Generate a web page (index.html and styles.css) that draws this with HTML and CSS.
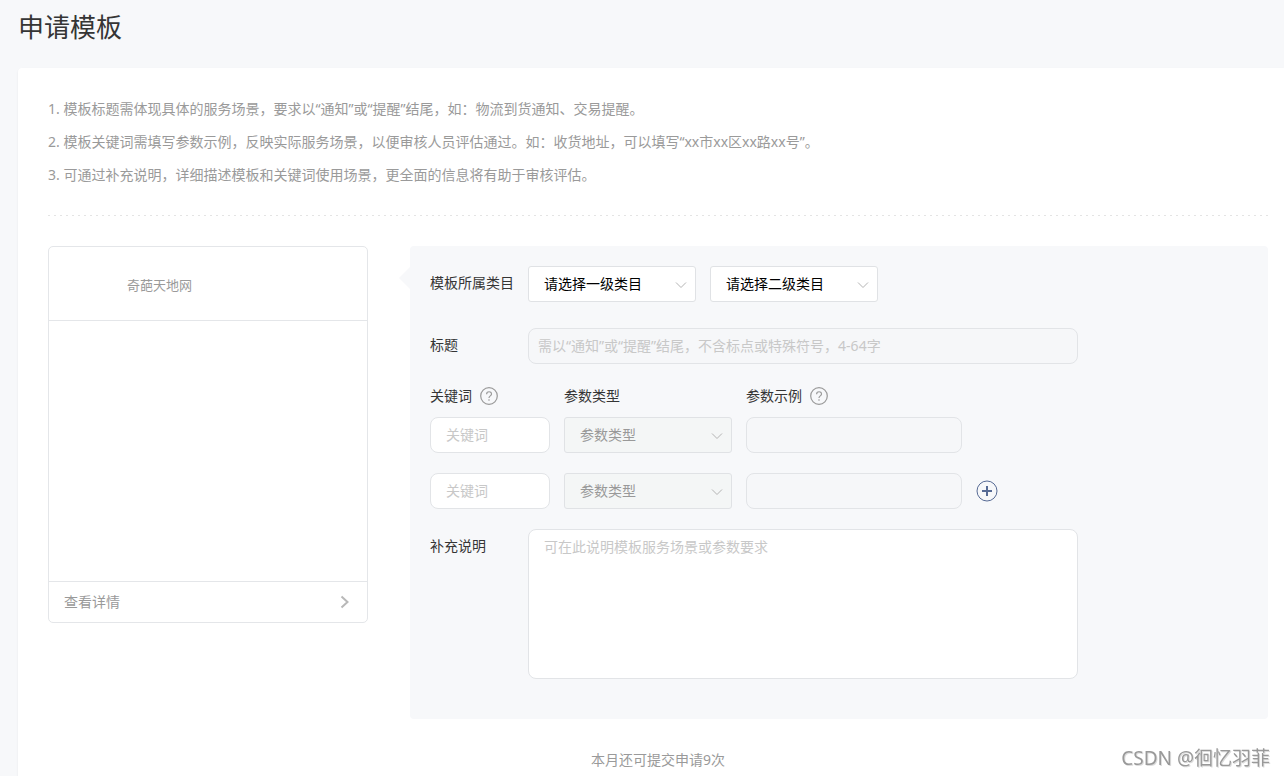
FILE: index.html
```html
<!DOCTYPE html>
<html lang="zh-CN">
<head>
<meta charset="utf-8">
<meta name="viewport" content="width=device-width, initial-scale=1">
<title>申请模板</title>
<link rel="stylesheet" href="styles.css">
</head>
<body>
<h1 class="page-title">申请模板</h1>
<main class="card">
  <ol class="tips">
    <li>1. 模板标题需体现具体的服务场景，要求以“通知”或“提醒”结尾，如：物流到货通知、交易提醒。</li>
    <li>2. 模板关键词需填写参数示例，反映实际服务场景，以便审核人员评估通过。如：收货地址，可以填写“xx市xx区xx路xx号”。</li>
    <li>3. 可通过补充说明，详细描述模板和关键词使用场景，更全面的信息将有助于审核评估。</li>
  </ol>
  <div class="divider"></div>
  <div class="columns">
    <section class="preview">
      <div class="preview-head">奇葩天地网</div>
      <div class="preview-body"></div>
      <a class="preview-foot" href="#">
        <span>查看详情</span>
        <svg class="arrow" viewBox="0 0 14 14"><path d="M3.5 1.5 9.5 7l-6 5.500"/></svg>
      </a>
    </section>
    <form class="panel">
      <div class="row">
        <label class="label" for="cat1">模板所属类目</label>
        <div class="controls">
          <div class="select">
            <select id="cat1"><option>请选择一级类目</option></select>
            <svg class="chevron" viewBox="0 0 12 8"><path d="M1 1.500 6 6.500l5-5"/></svg>
          </div>
          <div class="select">
            <select aria-label="二级类目"><option>请选择二级类目</option></select>
            <svg class="chevron" viewBox="0 0 12 8"><path d="M1 1.500 6 6.500l5-5"/></svg>
          </div>
        </div>
      </div>
      <div class="row title-row">
        <label class="label" for="title">标题</label>
        <input class="field title-field" id="title" type="text" disabled placeholder="需以“通知”或“提醒”结尾，不含标点或特殊符号，4-64字">
      </div>
      <div class="params">
        <div class="param-head" id="h-key">关键词
          <svg class="help" viewBox="0 0 18 18"><circle cx="9" cy="9" r="8.300"/><path d="M6.600 7.200C6.600 4 11.500 4 11.500 7c0 1.900-2.500 1.900-2.500 4"/><path d="M9 12.300v1.400"/></svg>
        </div>
        <div class="param-head" id="h-type">参数类型</div>
        <div class="param-head" id="h-sample">参数示例
          <svg class="help" viewBox="0 0 18 18"><circle cx="9" cy="9" r="8.300"/><path d="M6.600 7.200C6.600 4 11.500 4 11.500 7c0 1.900-2.500 1.900-2.500 4"/><path d="M9 12.300v1.400"/></svg>
        </div>
        <span></span>

        <input class="field key-field" type="text" aria-labelledby="h-key" placeholder="关键词">
        <div class="select">
          <select disabled aria-labelledby="h-type"><option>参数类型</option></select>
          <svg class="chevron" viewBox="0 0 12 8"><path d="M1 1.500 6 6.500l5-5"/></svg>
        </div>
        <input class="field" type="text" disabled aria-labelledby="h-sample">
        <span></span>

        <input class="field key-field" type="text" aria-labelledby="h-key" placeholder="关键词">
        <div class="select">
          <select disabled aria-labelledby="h-type"><option>参数类型</option></select>
          <svg class="chevron" viewBox="0 0 12 8"><path d="M1 1.500 6 6.500l5-5"/></svg>
        </div>
        <input class="field" type="text" disabled aria-labelledby="h-sample">
        <button class="add" type="button" aria-label="添加">
          <svg viewBox="0 0 22 22"><circle cx="11" cy="11" r="10"/><path class="plus" d="M11 6v10M6 11h10"/></svg>
        </button>
      </div>
      <div class="row note-row">
        <label class="label" for="note">补充说明</label>
        <textarea class="field note" id="note" placeholder="可在此说明模板服务场景或参数要求"></textarea>
      </div>
    </form>
  </div>
  <p class="quota">本月还可提交申请9次</p>
</main>
<div class="watermark">CSDN @徊忆羽菲</div>
</body>
</html>
```
FILE: styles.css
```css
* {
  box-sizing: border-box;
}

body {
  margin: 0;
  padding: 7px 0 0 18px;
  min-height: 100vh;
  display: flex;
  flex-direction: column;
  background: #f7f8fa;
  color: #353535;
  font: 14px/24px "Noto Sans", "Noto Sans CJK SC", sans-serif;
}

.page-title {
  margin: 0 0 21px;
  font-size: 26px;
  font-weight: 400;
  line-height: 40px;
}

.card {
  flex: 1;
  padding: 29px 16px 0 30px;
  background: #fff;
  border-radius: 4px 0 0 0;
  box-shadow: 0 1px 2px rgba(0, 0, 0, 0.08);
}

.tips {
  margin: 0;
  padding: 0;
  list-style: none;
  display: grid;
  gap: 9px;
  color: #9a9a9a;
}

.divider {
  height: 1px;
  margin: 28px 0 30px;
  background: repeating-linear-gradient(90deg, #e4e4e4 0 2px, transparent 2px 6px);
}

.columns {
  display: flex;
  align-items: flex-start;
  gap: 42px;
}

.preview {
  flex: 0 0 320px;
  border: 1px solid #e4e6e9;
  border-radius: 5px;
  color: #9a9a9a;
}

.preview-head {
  padding: 26px 78px 23px;
  font-size: 13px;
  border-bottom: 1px solid #e4e6e9;
}

.preview-body {
  height: 260px;
}

.preview-foot {
  display: flex;
  align-items: center;
  justify-content: space-between;
  padding: 8px 15px;
  border-top: 1px solid #e4e6e9;
  color: #9a9a9a;
  text-decoration: none;
}

svg {
  fill: none;
}

.arrow {
  width: 14px;
  height: 14px;
  stroke: #b8b8b8;
  stroke-width: 2;
}

.panel {
  position: relative;
  flex: 1;
  padding: 20px 20px 40px;
  background: #f7f8fa;
  border-radius: 4px;
}

.panel::before {
  content: "";
  position: absolute;
  left: -11px;
  top: 21px;
  border: solid transparent;
  border-width: 11px 11px 11px 0;
  border-right-color: #f7f8fa;
}

.row {
  display: flex;
}

.label {
  flex: 0 0 98px;
  line-height: 34px;
}

.controls {
  display: flex;
  gap: 14px;
}

.title-row {
  margin: 26px 0 20px;
}

.select {
  position: relative;
  width: 168px;
}

.select select {
  display: block;
  width: 100%;
  height: 36px;
  padding: 0 15px;
  appearance: none;
  border: 1px solid #e0e2e5;
  border-radius: 3px;
  background: #fff;
  color: #000;
  font: inherit;
}

.select select:disabled {
  background: #f4f6f6;
  color: #999;
  opacity: 1;
}

.chevron {
  position: absolute;
  right: 9px;
  top: 15px;
  width: 12px;
  height: 8px;
  stroke: #b4b4b4;
  pointer-events: none;
}

.field {
  display: block;
  width: 100%;
  height: 36px;
  min-width: 0;
  padding: 0 15px 2px;
  border: 1px solid #e2e4e7;
  border-radius: 8px;
  background: #fff;
  color: #353535;
  font: inherit;
}

.field:disabled {
  background: #f6f7f9;
}

.field::placeholder {
  color: #c8c8c8;
  opacity: 1;
}

.title-field {
  max-width: 550px;
  padding: 0 9px 2px;
}

.params {
  display: grid;
  grid-template-columns: 120px 168px 216px 22px;
  column-gap: 14px;
  row-gap: 20px;
  align-items: center;
}

.param-head {
  display: flex;
  align-items: center;
  gap: 8px;
  margin-bottom: -11px;
}

.help {
  width: 18px;
  height: 18px;
  stroke: #9a9a9a;
  stroke-width: 1.2;
}

.add {
  width: 22px;
  height: 22px;
  padding: 0;
  border: 0;
  background: none;
  stroke: #576b95;
}

.add svg {
  display: block;
}

.plus {
  stroke-width: 2;
}

.note-row {
  margin-top: 20px;
}

.note {
  max-width: 550px;
  height: 150px;
  padding: 5px 15px;
  resize: none;
}

.quota {
  margin: 29px 0 0;
  color: #9a9a9a;
  text-align: center;
}

.watermark {
  position: fixed;
  right: 14px;
  bottom: 4px;
  font-size: 19px;
  line-height: 28px;
  color: #999;
  text-shadow: 1px 1px 0 #ddd;
}
```
